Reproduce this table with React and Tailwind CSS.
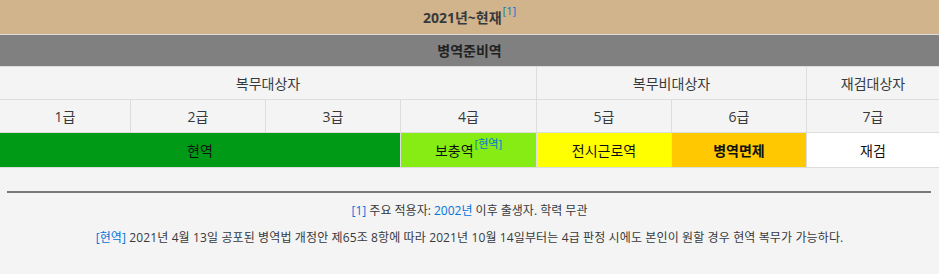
export default function App() {
  const font = { fontFamily: '"Open Sans", "Noto Sans CJK KR", sans-serif' };
  return (
    <div className="w-[939px] h-[274px] bg-[#f4f4f4] text-[#373a3c] overflow-hidden" style={font}>
      {/* 병역판정 표 */}
      <div className="grid grid-cols-[130px_134px_134px_135px_134px_134px_1fr] gap-px bg-[#dddddd] pb-px text-[14px]">
        <div className="col-span-7 h-[34px] bg-[#d2b48c] flex items-center justify-center font-bold">
          2021년~현재<sup className="text-[11px] text-[#0275d8] font-normal ml-px -top-[6px]">[1]</sup>
        </div>
        <div className="col-span-7 h-[31px] bg-[#808080] flex items-center justify-center font-semibold text-[#222]">
          병역준비역
        </div>
        <div className="col-span-4 h-[32px] bg-[#f4f4f4] flex items-center justify-center">복무대상자</div>
        <div className="col-span-2 h-[32px] bg-[#f4f4f4] flex items-center justify-center">복무비대상자</div>
        <div className="h-[32px] bg-[#f4f4f4] flex items-center justify-center">재검대상자</div>
        {['1급', '2급', '3급', '4급', '5급', '6급', '7급'].map((g) => (
          <div key={g} className="h-[32px] bg-[#f4f4f4] flex items-center justify-center">{g}</div>
        ))}
        <div className="col-span-3 h-[34px] bg-[#009a17] flex items-center justify-center text-[#111]">현역</div>
        <div className="h-[34px] bg-[#86ec14] flex items-center justify-center text-[#111]">
          보충역<sup className="text-[11px] text-[#0275d8] ml-px -top-[6px]">[현역]</sup>
        </div>
        <div className="h-[34px] bg-[#ffff00] flex items-center justify-center text-[#111]">전시근로역</div>
        <div className="h-[34px] bg-[#ffc800] flex items-center justify-center font-bold text-[#111]">병역면제</div>
        <div className="h-[34px] bg-white flex items-center justify-center text-[#111]">재검</div>
      </div>

      {/* 각주 */}
      <div className="px-[7px] pt-[23px]">
        <hr className="border-0 h-[2px] bg-[#7a7a7a] mr-[1px]" />
        <div className="text-[12px] text-center mt-[9px] leading-[18px]">
          <p><span className="text-[#0275d8]">[1]</span> 주요 적용자: <span className="text-[#0275d8]">2002년</span> 이후 출생자. 학력 무관</p>
          <p className="mt-[9px] tracking-[0.12px]">
            <span className="text-[#0275d8]">[현역]</span> 2021년 4월 13일 공포된 병역법 개정안 제65조 8항에 따라 2021년 10월 14일부터는 4급 판정 시에도 본인이 원할 경우 현역 복무가 가능하다.
          </p>
        </div>
      </div>
    </div>
  );
}
